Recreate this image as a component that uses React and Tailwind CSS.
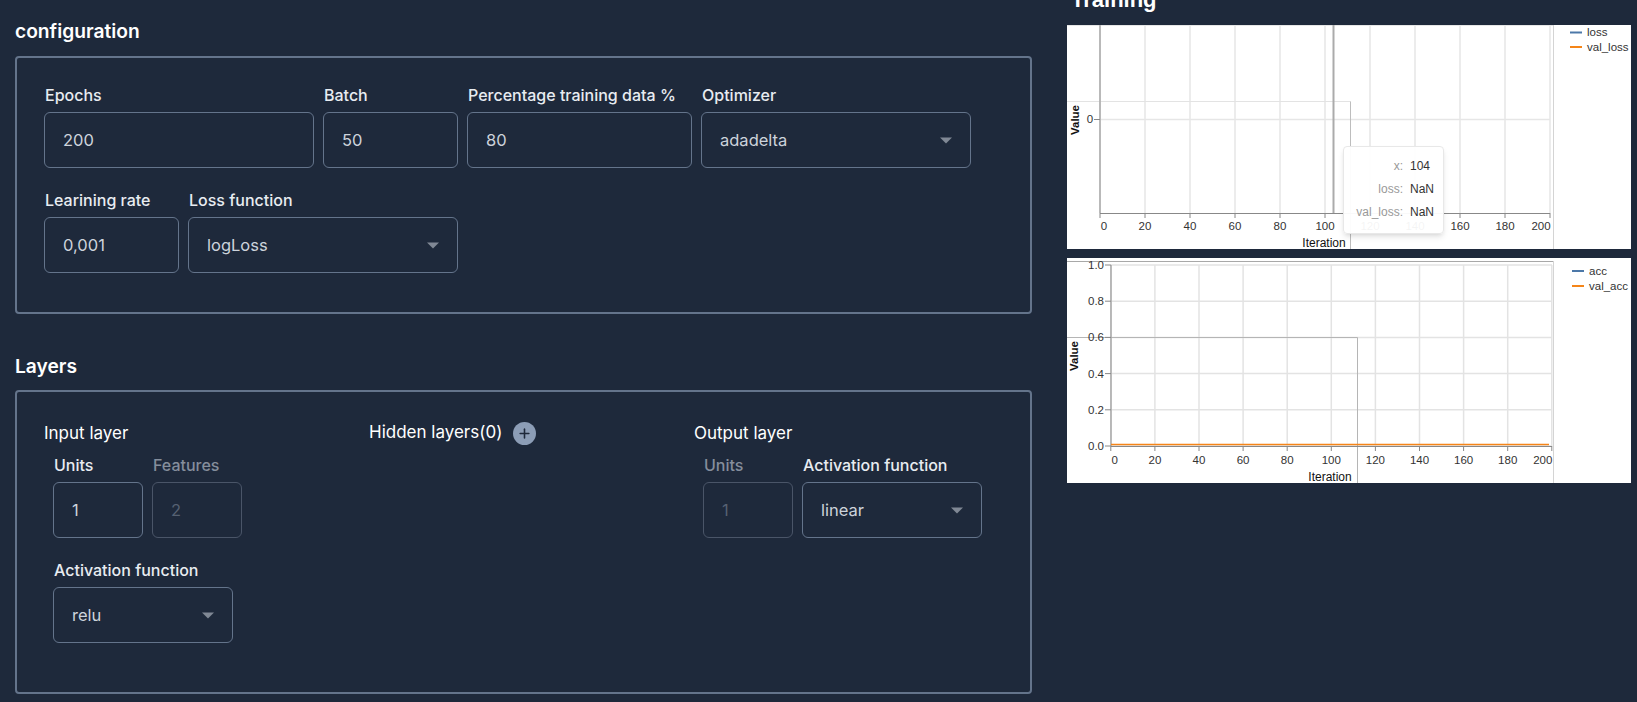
import React from "react";
import { Plus } from "lucide-react";

const FONT = "font-['Inter','Noto_Sans',sans-serif]";

const Label = ({ children, muted }) => (
  <label className={`block ml-px mb-[5px] text-base leading-6 font-medium ${muted ? "text-[#858e9c]" : "text-[#e8ecf1]"}`}>
    {children}
  </label>
);

const NumberField = ({ label, value, width, disabled }) => (
  <div className={width}>
    <Label muted={disabled}>{label}</Label>
    <input
      readOnly
      disabled={disabled}
      value={value}
      className={`block w-full h-14 px-[18px] bg-transparent rounded-md border text-[16.5px] outline-none ${
        disabled ? "border-[#4a5568] text-[#566172]" : "border-[#64748b] text-[#cdd3db]"
      }`}
    />
  </div>
);

const SelectField = ({ label, value, width }) => (
  <div className={width}>
    <Label>{label}</Label>
    <div className="relative">
      <select
        value={value}
        onChange={() => {}}
        className="block w-full h-14 pl-[18px] pr-10 bg-transparent rounded-md border border-[#64748b] text-[16.5px] text-[#cdd3db] outline-none appearance-none"
      >
        <option value={value}>{value}</option>
      </select>
      <svg className="absolute right-[19px] top-[25px] pointer-events-none" width="12" height="7" viewBox="0 0 12 7">
        <path d="M0 0.5h12L6 6.5z" fill="#808895" />
      </svg>
    </div>
  </div>
);

const Panel = ({ title, children, className, gap }) => (
  <section>
    <h2 className={`text-[19.2px] leading-7 font-semibold text-white ${gap}`}>{title}</h2>
    <div className={`border-2 border-[#64748b] rounded ${className}`}>{children}</div>
  </section>
);

const xTicks = [0, 20, 40, 60, 80, 100, 120, 140, 160, 180, 200];

const LossChart = () => {
  const x = (v) => 33 + v * 2.25;
  return (
    <svg width="564" height="224" className="block">
      {xTicks.map((t) => (
        <line key={t} x1={x(t)} x2={x(t)} y1="0" y2="188" stroke="#e6e6e6" strokeWidth="1.5" />
      ))}
      <line x1="33" x2="483" y1="94.5" y2="94.5" stroke="#e6e6e6" strokeWidth="1.5" />
      <line x1="0" x2="486" y1="0.5" y2="0.5" stroke="#e6e6e6" />
      <path d="M0 76.5H283.5" fill="none" stroke="#e3e3e3" />
      <line x1="283.5" x2="283.5" y1="76.5" y2="224" stroke="#bdbdbd" />
      <line x1="33" x2="33" y1="0" y2="188" stroke="#a8a8a8" strokeWidth="1.5" />
      <line x1="266.5" x2="266.5" y1="0" y2="188" stroke="#ababab" strokeWidth="2" />
      <line x1="33" x2="483" y1="188.5" y2="188.5" stroke="#888" />
      <line x1="486.5" x2="486.5" y1="0" y2="224" stroke="#d4d4d4" />
      <line x1="27" x2="33" y1="94.5" y2="94.5" stroke="#888" />
      {xTicks.map((t) => (
        <line key={t} x1={x(t)} x2={x(t)} y1="188" y2="193" stroke="#888" />
      ))}
      <g fontFamily="'Liberation Sans', sans-serif" fontSize="11.5" fill="#333">
        {xTicks.map((t) => (
          <text key={t} x={t === 0 ? x(t) + 4 : t === 200 ? x(t) - 9 : x(t)} y="205" textAnchor="middle">
            {t}
          </text>
        ))}
        <text x="23" y="98" textAnchor="middle">0</text>
        <text x="257" y="222" textAnchor="middle" fontSize="12" fontWeight="500" fill="#111">Iteration</text>
        <text transform="translate(12 95) rotate(-90)" textAnchor="middle" fontWeight="700" fill="#111">Value</text>
        <text x="520" y="11">loss</text>
        <text x="520" y="26">val_loss</text>
      </g>
      <line x1="503" x2="515" y1="7.5" y2="7.5" stroke="#4c78a8" strokeWidth="2" />
      <line x1="503" x2="515" y1="22" y2="22" stroke="#f58518" strokeWidth="2" />
    </svg>
  );
};

const AccChart = () => {
  const x = (v) => 43.8 + v * 2.205;
  const y = (v) => 188 - v * 181;
  const yTicks = [0, 0.2, 0.4, 0.6, 0.8, 1];
  return (
    <svg width="564" height="225" className="block">
      {xTicks.map((t) => (
        <line key={t} x1={x(t)} x2={x(t)} y1="7" y2="188" stroke="#e3e3e3" strokeWidth="1.5" />
      ))}
      {yTicks.map((t) => (
        <line key={t} x1="44" x2="485" y1={y(t)} y2={y(t)} stroke="#e3e3e3" strokeWidth="1.5" />
      ))}
      <line x1="0" x2="486.5" y1="3.5" y2="3.5" stroke="#a8a8a8" />
      <line x1="486.5" x2="486.5" y1="3.5" y2="225" stroke="#d4d4d4" />
      <path d="M0 79.5H290.5V225" fill="none" stroke="#b5b5b5" />
      <line x1="44" x2="44" y1="7" y2="188" stroke="#a8a8a8" strokeWidth="1.5" />
      <line x1="44" x2="482" y1="186.5" y2="186.5" stroke="#f58518" strokeWidth="1.5" />
      <line x1="44" x2="485" y1="188.5" y2="188.5" stroke="#888" />
      {xTicks.map((t) => (
        <line key={t} x1={x(t)} x2={x(t)} y1="188" y2="193" stroke="#888" />
      ))}
      {yTicks.map((t) => (
        <line key={t} x1="38" x2="44" y1={y(t)} y2={y(t)} stroke="#888" />
      ))}
      <g fontFamily="'Liberation Sans', sans-serif" fontSize="11.5" fill="#333">
        {xTicks.map((t) => (
          <text key={t} x={t === 0 ? x(t) + 4 : t === 200 ? x(t) - 9 : x(t)} y="206" textAnchor="middle">
            {t}
          </text>
        ))}
        {yTicks.map((t) => (
          <text key={t} x="37" y={y(t) + 4} textAnchor="end">
            {t.toFixed(1)}
          </text>
        ))}
        <text x="263" y="223" textAnchor="middle" fontSize="12" fontWeight="500" fill="#111">Iteration</text>
        <text transform="translate(11 98) rotate(-90)" textAnchor="middle" fontWeight="700" fill="#111">Value</text>
        <text x="522" y="17">acc</text>
        <text x="522" y="32">val_acc</text>
      </g>
      <line x1="505" x2="517" y1="13" y2="13" stroke="#4c78a8" strokeWidth="2" />
      <line x1="505" x2="517" y1="28" y2="28" stroke="#f58518" strokeWidth="2" />
    </svg>
  );
};

const Tooltip = () => (
  <div className="absolute left-[276px] top-[121px] w-[101px] h-[88px] bg-white/95 rounded border border-[#e8e8e8] shadow-md font-['Liberation_Sans',sans-serif] text-xs">
    <div className="grid grid-cols-[59px_1fr] gap-x-[7px] gap-y-2 pt-3">
      <span className="text-right text-[#999] leading-[15px]">x:</span>
      <span className="text-[#333] leading-[15px]">104</span>
      <span className="text-right text-[#999] leading-[15px]">loss:</span>
      <span className="text-[#333] leading-[15px]">NaN</span>
      <span className="text-right text-[#999] leading-[15px]">val_loss:</span>
      <span className="text-[#333] leading-[15px]">NaN</span>
    </div>
  </div>
);

const App = () => {
  return (
    <div className={`flex h-[702px] overflow-hidden bg-[#1e293b] ${FONT}`}>
      {/* Left column */}
      <div className="w-[1032px] shrink-0 pl-[15px] pt-[17px]">
        <Panel title="configuration" gap="mb-[11px]" className="pl-[27px] pt-[25px] pb-[39px]">
          <div className="flex gap-[9px]">
            <NumberField label="Epochs" value="200" width="w-[270px]" />
            <NumberField label="Batch" value="50" width="w-[135px]" />
            <NumberField label="Percentage training data %" value="80" width="w-[225px]" />
            <SelectField label="Optimizer" value="adadelta" width="w-[270px]" />
          </div>
          <div className="flex gap-[9px] mt-5">
            <NumberField label="Learining rate" value="0,001" width="w-[135px]" />
            <SelectField label="Loss function" value="logLoss" width="w-[270px]" />
          </div>
        </Panel>

        <div className="mt-[38px]">
          <Panel title="Layers" gap="mb-[10px]" className="h-[304px] pl-[27px] pt-[29px] flex text-white">
            <div className="w-[325px]">
              <div className="text-[17px] leading-6 mb-2">Input layer</div>
              <div className="pl-[9px]">
                <div className="flex gap-[9px]">
                  <NumberField label="Units" value="1" width="w-[90px]" />
                  <NumberField label="Features" value="2" width="w-[90px]" disabled />
                </div>
                <div className="mt-5">
                  <SelectField label="Activation function" value="relu" width="w-[180px]" />
                </div>
              </div>
            </div>

            <div className="w-[325px]">
              <div className="flex items-center h-6 gap-[11px] text-[17px]">
                <span>Hidden layers(0)</span>
                <button className="w-[23px] h-[23px] rounded-full bg-[#8c9db6] flex items-center justify-center" aria-label="Add layer">
                  <Plus size={15} strokeWidth={2.5} color="#1e293b" />
                </button>
              </div>
            </div>

            <div>
              <div className="text-[17px] leading-6 mb-2">Output layer</div>
              <div className="pl-[9px] flex gap-[9px]">
                <NumberField label="Units" value="1" width="w-[90px]" disabled />
                <SelectField label="Activation function" value="linear" width="w-[180px]" />
              </div>
            </div>
          </Panel>
        </div>
      </div>

      {/* Training charts */}
      <div className="ml-[35px] w-[564px] shrink-0">
        <h2 className="pl-[4px] -mt-4 h-[40.5px] text-[22px] leading-8 font-bold text-white font-['Liberation_Sans',sans-serif]">Training</h2>
        <div className="relative bg-white h-[224px]">
          <LossChart />
          <Tooltip />
        </div>
        <div className="bg-white h-[225px] mt-[9.5px]">
          <AccChart />
        </div>
      </div>
    </div>
  );
};

export default App;
